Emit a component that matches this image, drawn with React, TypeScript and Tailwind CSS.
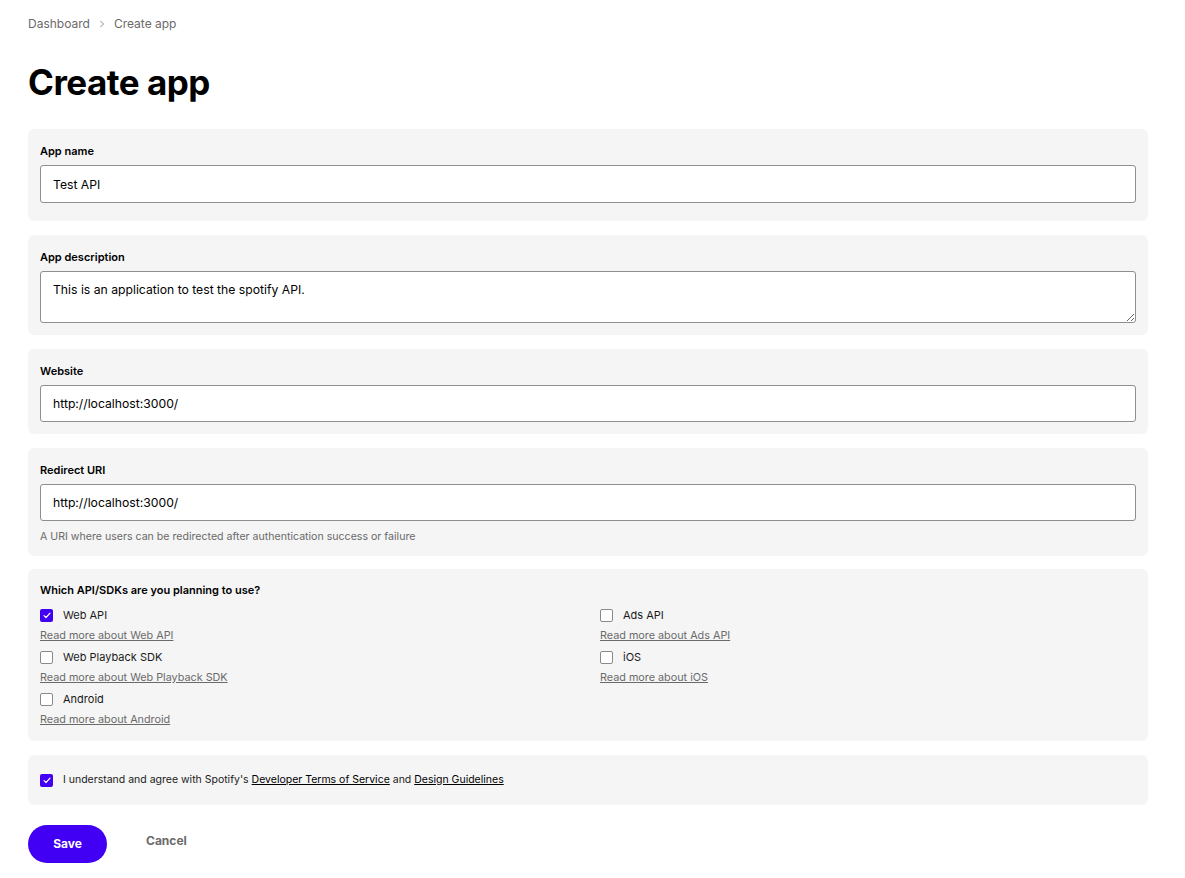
import React, { useState } from 'react';

const font = { fontFamily: 'Inter, "Noto Sans", sans-serif' };

type Sdk = { id: string; label: string; link: string };

const leftSdks: Sdk[] = [
  { id: 'web', label: 'Web API', link: 'Read more about Web API' },
  { id: 'playback', label: 'Web Playback SDK', link: 'Read more about Web Playback SDK' },
  { id: 'android', label: 'Android', link: 'Read more about Android' },
];

const rightSdks: Sdk[] = [
  { id: 'ads', label: 'Ads API', link: 'Read more about Ads API' },
  { id: 'ios', label: 'iOS', link: 'Read more about iOS' },
];

const Check: React.FC<{ checked: boolean; onClick?: () => void }> = ({ checked, onClick }) => (
  <button
    type="button"
    onClick={onClick}
    className={`flex h-[13px] w-[13px] shrink-0 items-center justify-center rounded-[2px] ${
      checked ? 'bg-[#4100f4]' : 'border border-[#8a8a8a] bg-white'
    }`}
  >
    {checked && (
      <svg width="8" height="7" viewBox="0 0 8 7" fill="none">
        <path d="M1 3.6L3 5.5L7 1.2" stroke="white" strokeWidth="1.2" strokeLinecap="round" strokeLinejoin="round" />
      </svg>
    )}
  </button>
);

const Panel: React.FC<{ children: React.ReactNode; className?: string }> = ({ children, className = '' }) => (
  <div className={`rounded-[6px] bg-[#f5f5f5] px-3 ${className}`}>{children}</div>
);

const Label: React.FC<{ children: React.ReactNode }> = ({ children }) => (
  <div className="text-[11px] font-semibold leading-[14px] text-black">{children}</div>
);

export default function App() {
  const [checked, setChecked] = useState<Record<string, boolean>>({ web: true });
  const [agree, setAgree] = useState(true);

  const toggle = (id: string) => setChecked((c) => ({ ...c, [id]: !c[id] }));

  const renderSdk = (s: Sdk) => (
    <div key={s.id}>
      <div className="flex h-[20px] items-center gap-[10px]">
        <Check checked={!!checked[s.id]} onClick={() => toggle(s.id)} />
        <span className="text-[11px] text-[#1a1a1a]">{s.label}</span>
      </div>
      <a href="#" className="block h-[22px] text-[10.8px] leading-[21px] text-[#6a6a6a] underline">
        {s.link}
      </a>
    </div>
  );

  return (
    <div style={font} className="min-h-screen bg-white px-7 pt-[15px] text-black">
      <div className="flex items-center gap-[9px] text-[12px] text-[#6a6a6a]">
        <span>Dashboard</span>
        <svg width="6" height="8" viewBox="0 0 6 8" fill="none">
          <path d="M1.5 1L4.5 4L1.5 7" stroke="#8a8a8a" strokeWidth="1" />
        </svg>
        <span>Create app</span>
      </div>

      <h1 className="mt-[27px] text-[35px] font-bold leading-[44px] tracking-[-0.5px]">Create app</h1>

      <div className="mt-[25px] flex w-[1120px] flex-col gap-[14px]">
        <Panel className="pb-[18px] pt-[15px]">
          <Label>App name</Label>
          <input
            defaultValue="Test API"
            className="mt-[7px] block h-[38px] w-full rounded-[3px] border border-[#8f8f8f] bg-white px-3 text-[12.2px] text-black outline-none"
          />
        </Panel>

        <Panel className="pb-[12px] pt-[15px]">
          <Label>App description</Label>
          <textarea
            defaultValue="This is an application to test the spotify API."
            className="mt-[7px] block h-[52px] w-full rounded-[3px] border border-[#8f8f8f] bg-white px-3 pt-[9px] text-[12.2px] leading-[18px] text-black outline-none"
          />
        </Panel>

        <Panel className="pb-[12px] pt-[15px]">
          <Label>Website</Label>
          <input
            defaultValue="http://localhost:3000/"
            className="mt-[7px] block h-[37px] w-full rounded-[3px] border border-[#8f8f8f] bg-white px-3 text-[12.2px] text-black outline-none"
          />
        </Panel>

        <Panel className="-mb-px pb-[12px] pt-[15px]">
          <Label>Redirect URI</Label>
          <input
            defaultValue="http://localhost:3000/"
            className="mt-[7px] block h-[37px] w-full rounded-[3px] border border-[#8f8f8f] bg-white px-3 text-[12.2px] text-black outline-none"
          />
          <div className="mt-[9px] text-[10.6px] leading-[14px] text-[#6a6a6a]">
            A URI where users can be redirected after authentication success or failure
          </div>
        </Panel>

        <Panel className="pb-[10px] pt-[14px]">
          <Label>Which API/SDKs are you planning to use?</Label>
          <div className="mt-[8px] grid grid-cols-[560px_1fr]">
            <div>{leftSdks.map(renderSdk)}</div>
            <div>{rightSdks.map(renderSdk)}</div>
          </div>
        </Panel>

        <Panel className="flex h-[50px] items-center gap-[10px]">
          <Check checked={agree} onClick={() => setAgree(!agree)} />
          <span className="text-[10.5px] text-[#1a1a1a]">
            I understand and agree with Spotify's{' '}
            <a href="#" className="text-black underline">Developer Terms of Service</a> and{' '}
            <a href="#" className="text-black underline">Design Guidelines</a>
          </span>
        </Panel>
      </div>

      <div className="mt-[20px] flex items-start gap-[39px] pb-4">
        <button className="h-[38px] w-[79px] rounded-full bg-[#4100f4] text-[12px] font-bold text-white">Save</button>
        <button className="mt-[7px] text-[12px] font-bold text-[#6a6a6a]">Cancel</button>
      </div>
    </div>
  );
}
